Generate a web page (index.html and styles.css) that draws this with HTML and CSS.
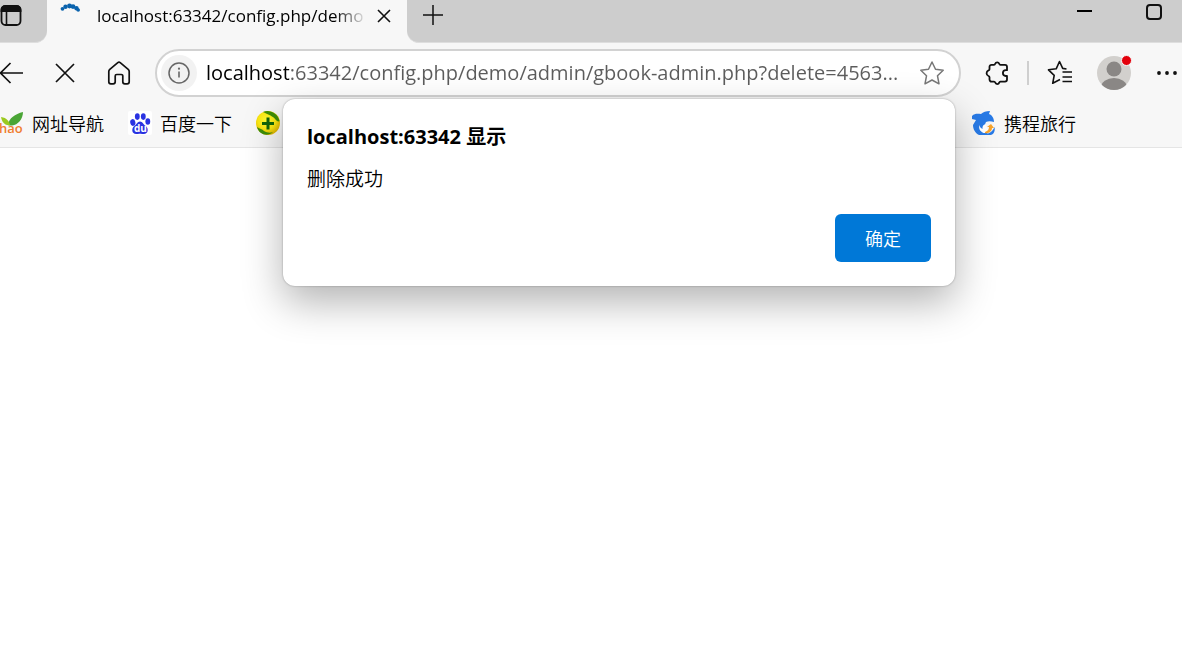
FILE: index.html
```html
<!DOCTYPE html>
<html lang="zh-CN">
<head>
<meta charset="utf-8">
<meta name="viewport" content="width=device-width, initial-scale=1">
<title>localhost:63342</title>
<link rel="stylesheet" href="styles.css">
</head>
<body>
<header class="chrome">
  <div class="tab-strip">
    <div class="strip-start">
      <button class="icon-button" type="button" aria-label="标签页操作">
        <svg width="24" height="24" viewBox="0 0 24 24"><rect x="1.500" y="2" width="19" height="19" rx="4" fill="none" stroke="#111" stroke-width="1.800"/><path d="M.6 8V6a4.500 4.500 0 0 1 4.500-4.800h11.500A4.500 4.500 0 0 1 21.400 6v2z" fill="#111"/><path d="M6.500 7v14" stroke="#111" stroke-width="1.600"/></svg>
      </button>
    </div>
    <div class="tab">
      <svg class="spinner" width="20" height="20" viewBox="0 0 20 20" fill="#0a63ad"><circle cx="2.500" cy="4.800" r="1.900"/><circle cx="5.500" cy="2.800" r="2.200"/><circle cx="9.500" cy="2" r="2.400"/><circle cx="13" cy="2.600" r="2.400"/><circle cx="16.500" cy="4.200" r="2.200"/><circle cx="18.200" cy="6" r="1.800"/></svg>
      <span class="tab-title">localhost:63342/config.php/demo</span>
      <button class="icon-button" type="button" aria-label="关闭标签页">
        <svg width="14" height="14" viewBox="0 0 14 14"><path d="M1 1l12 12M13 1L1 13" stroke="#111" stroke-width="1.600"/></svg>
      </button>
    </div>
    <div class="strip-end">
      <button class="icon-button" type="button" aria-label="新建标签页">
        <svg width="22" height="22" viewBox="0 0 22 22"><path d="M11 1v20M1 11h20" stroke="#111" stroke-width="1.500"/></svg>
      </button>
      <div class="window-controls">
        <button class="icon-button" type="button" aria-label="最小化">
          <svg width="16" height="16" viewBox="0 0 16 16"><path d="M0 7h15" stroke="#000" stroke-width="2"/></svg>
        </button>
        <button class="icon-button" type="button" aria-label="最大化">
          <svg width="16" height="16" viewBox="0 0 16 16"><rect x="1" y="1" width="14" height="14" rx="3" fill="none" stroke="#111" stroke-width="2"/></svg>
        </button>
      </div>
    </div>
  </div>

  <div class="toolbar">
    <nav class="nav-buttons" aria-label="导航">
      <button class="icon-button" type="button" aria-label="返回">
        <svg width="24" height="24" viewBox="0 0 24 24"><path d="M11.500 2L1.500 12l10 10M1.500 12h22.500" fill="none" stroke="#111" stroke-width="1.700"/></svg>
      </button>
      <button class="icon-button" type="button" aria-label="停止">
        <svg width="24" height="24" viewBox="0 0 24 24"><path d="M3 3l18 18M21 3L3 21" stroke="#111" stroke-width="1.700"/></svg>
      </button>
      <button class="icon-button" type="button" aria-label="主页">
        <svg width="24" height="24" viewBox="0 0 24 24"><path d="M10.800 1.600a2 2 0 0 1 2.400 0l8 6.700a3 3 0 0 1 1 2.300v10.200a2 2 0 0 1-2 2h-2.400a2 2 0 0 1-2-2V15a1.500 1.500 0 0 0-1.500-1.500h-4.600A1.500 1.500 0 0 0 8.200 15v5.800a2 2 0 0 1-2 2H3.800a2 2 0 0 1-2-2V10.600a3 3 0 0 1 1-2.300z" fill="none" stroke="#111" stroke-width="1.700"/></svg>
      </button>
    </nav>
    <div class="address-bar">
      <button class="icon-button site-info" type="button" aria-label="网站信息">
        <svg width="22" height="22" viewBox="0 0 22 22"><circle cx="11" cy="11" r="10" fill="none" stroke="#666" stroke-width="1.500"/><path d="M11 9.500v6" stroke="#666" stroke-width="1.600"/><circle cx="11" cy="6.700" r="1.100" fill="#666"/></svg>
      </button>
      <input class="address" type="text" aria-label="地址" value="localhost:63342/config.php/demo/admin/gbook-admin.php?delete=4563...">
      <button class="icon-button" type="button" aria-label="收藏此页">
        <svg width="26" height="26" viewBox="0 0 26 26"><path d="M13 2l3.500 7.300 7.700 1-5.700 5.500 1.500 8L13 20l-7 3.800 1.500-8-5.700-5.500 7.700-1z" fill="none" stroke="#777" stroke-width="1.500" stroke-linejoin="round"/></svg>
      </button>
    </div>
    <div class="tools">
      <button class="icon-button" type="button" aria-label="扩展">
        <svg width="24" height="24" viewBox="0 0 24 24"><path d="M6.500 3.800H9c.8 0 1-.4 1.200-1a2.100 2.100 0 0 1 4 0c.2.600.4 1 1.200 1H20a2 2 0 0 1 2 2V9.200h-1.200a2.900 2.900 0 0 0 0 5.800H22v3.600a2 2 0 0 1-2 2h-4.600c-.8 0-1 .4-1.200 1a2.100 2.100 0 0 1-4 0c-.2-.6-.4-1-1.200-1H6.500a2 2 0 0 1-2-2v-2.400c0-.8-.4-1-1-1.200a3 3 0 0 1 0-5.600c.6-.2 1-.4 1-1.200V5.800a2 2 0 0 1 2-2z" fill="none" stroke="#111" stroke-width="1.800" stroke-linejoin="round"/></svg>
      </button>
      <span class="divider"></span>
      <button class="icon-button" type="button" aria-label="收藏夹">
        <svg width="26" height="26" viewBox="0 0 26 26"><path d="M19.500 9l-3.800-.6L12.500 1.500 9.200 8.800l-7.700 1 5.700 5.500-1.500 8L13 19.500M15.500 12H25M15.500 17H25M15.500 21.500H25" fill="none" stroke="#111" stroke-width="1.600" stroke-linejoin="round"/></svg>
      </button>
      <button class="icon-button profile" type="button" aria-label="个人资料">
        <svg width="34" height="34" viewBox="0 0 34 34"><defs><clipPath id="avatar"><circle cx="17" cy="17" r="17"/></clipPath></defs><g clip-path="url(#avatar)"><path d="M0 0h34v34H0z" fill="#d2d0cd"/><circle cx="17" cy="13" r="7.500" fill="#8a8785"/><ellipse cx="17" cy="31.500" rx="13" ry="9.500" fill="#8a8785"/></g></svg>
        <span class="badge"></span>
      </button>
      <button class="icon-button" type="button" aria-label="更多">
        <svg width="20" height="6" viewBox="0 0 20 6" fill="#111"><circle cx="2" cy="3" r="1.900"/><circle cx="10" cy="3" r="1.900"/><circle cx="18" cy="3" r="1.900"/></svg>
      </button>
    </div>
  </div>

  <nav class="bookmarks" aria-label="收藏夹栏">
    <a class="bookmark" href="#nav">
      <svg width="24" height="24" viewBox="0 0 24 24"><path d="M8 14C9 7 15 3 23 1c0 7-5 13-11 13.500-2 .3-3 0-4-.5z" fill="#4aa536"/><path d="M1 6c6 1 8 4 9 8-4 1-8-2-9-8z" fill="#9bc91f"/><text class="hao" x="-1" y="22">hao</text></svg>
      网址导航
    </a>
    <a class="bookmark" href="#baidu">
      <svg width="24" height="24" viewBox="0 0 24 24"><rect width="24" height="24" rx="2" fill="#fff"/><g fill="#2932e1"><ellipse cx="4.800" cy="11.500" rx="2.600" ry="3.400" transform="rotate(-10 4.800 11.500)"/><ellipse cx="9.300" cy="5.600" rx="2.400" ry="3.300"/><ellipse cx="15.300" cy="5.600" rx="2.400" ry="3.300"/><ellipse cx="19.800" cy="10.500" rx="2.400" ry="3.200"/><path d="M12 10.500c2.500 0 3.500 3 5.800 4.600 3 2.500 2.500 8-2 8-1.500 0-2.300-.4-3.800-.4s-2.300.4-3.800.4c-4.500 0-5-5.500-2-8C8.500 13.500 9.500 10.500 12 10.500z"/></g><text class="du" x="6" y="21">du</text></svg>
      百度一下
    </a>
    <a class="bookmark bookmark-fill" href="#360" aria-label="360">
      <svg width="24" height="24" viewBox="0 0 24 24"><defs><radialGradient id="ball" cx=".45" cy=".4" r=".6"><stop offset="0" stop-color="#ffff38"/><stop offset=".6" stop-color="#fbe913"/><stop offset="1" stop-color="#dfb500"/></radialGradient></defs><circle cx="12" cy="12" r="12" fill="url(#ball)"/><path d="M7 1c6-3 15 1 16.500 9-1 1-3 0-4-1.500C17 5 13 4 7 1zM1 16c3 2 5 2 7 4 3 2 7 2 9 1-5 5-14 3-16-5z" fill="#3e8f08"/><path d="M12 6.500v12M6 12.500h12" stroke="#12660a" stroke-width="3"/></svg>
    </a>
    <a class="bookmark" href="#ctrip">
      <svg width="24" height="24" viewBox="0 0 24 24"><path d="M0 5c3-3 6-2 9-2 2-2 5-3 9-3l-1 3c3 1 5 4 5 8-3-1-6-1-8 0-2 3 0 6-1 9l4 4H7C3 22 1 18 1 14l3-5-4-1z" fill="#287ae6"/><path d="M7.500 14c-1 3 0 6 4 8 4 0 7-2 8-5l-4 1-2-5c-3 1-3 3-3 5-1.500-1-3-2-3-4z" fill="#fff"/><path d="M13 21c3-1 4-3 4-5h-2l4-3 3 4h-2c0 3-3 6-7 5z" fill="#f7a32b"/><path d="M22.500 16c1 4-1 8-4 8h-7c5-1 9-3 11-8z" fill="#287ae6"/></svg>
      携程旅行
    </a>
  </nav>
</header>

<main class="page">
  <section class="dialog" role="alertdialog" aria-labelledby="dialog-title" aria-describedby="dialog-text">
    <h1 class="dialog-title" id="dialog-title">localhost:63342 显示</h1>
    <p class="dialog-text" id="dialog-text">删除成功</p>
    <div class="dialog-actions">
      <button class="confirm" type="button">确定</button>
    </div>
  </section>
</main>
</body>
</html>
```
FILE: styles.css
```css
* {
  box-sizing: border-box;
}

body {
  margin: 0;
  min-height: 100vh;
  background: #fff;
  color: #000;
  font-family: "Open Sans", "Noto Sans", "Noto Sans CJK SC", sans-serif;
  font-size: 18px;
  line-height: 24px;
}

svg {
  display: block;
  flex: none;
  overflow: visible;
}

.icon-button {
  display: flex;
  flex: none;
  align-items: center;
  justify-content: center;
  padding: 0;
  border: 0;
  background: none;
}

.chrome {
  background: #f7f7f7;
  border-bottom: 1px solid #e5e5e5;
}

.tab-strip {
  display: flex;
  height: 43px;
}

.strip-start,
.strip-end {
  display: flex;
  align-items: flex-start;
  background: #cdcdcd;
  border-bottom: 1px solid #dedede;
}

.strip-start {
  width: 47px;
  padding-top: 4px;
  border-bottom-right-radius: 12px;
}

.strip-end {
  flex: 1;
  justify-content: space-between;
  padding: 4px 20px 0 15px;
  border-bottom-left-radius: 12px;
}

.window-controls {
  display: flex;
  gap: 53px;
}

.tab {
  display: flex;
  align-items: flex-start;
  width: 360px;
  padding: 4px 16px 0 13px;
}

.tab-title {
  flex: 1;
  margin: 0 10px 0 17px;
  font-size: 17px;
  white-space: nowrap;
  -webkit-mask-image: linear-gradient(to left, transparent, #000 32px);
  mask-image: linear-gradient(to left, transparent, #000 32px);
}

.tab .icon-button {
  height: 24px;
}

.toolbar {
  display: flex;
  align-items: center;
  gap: 24px;
  padding: 6px 5px 0 0;
}

.nav-buttons {
  display: flex;
  gap: 30px;
  margin-left: -1px;
}

.address-bar {
  display: flex;
  flex: 1;
  align-items: center;
  height: 48px;
  padding: 0 14px 0 4px;
  border: 2px solid #d2d2d2;
  border-radius: 24px;
  background: #fff;
}

.site-info {
  width: 36px;
  height: 36px;
  border-radius: 50%;
  background: #f2f2f2;
}

.address {
  flex: 1;
  min-width: 0;
  margin: 0 16px 0 9px;
  padding: 0;
  border: 0;
  background: linear-gradient(to right, #000 83px, #5c5c5c 83px);
  -webkit-background-clip: text;
  background-clip: text;
  color: transparent;
  font: 20px/28px "Open Sans", "Noto Sans", sans-serif;
  text-overflow: ellipsis;
}

.tools {
  display: flex;
  align-items: center;
  gap: 18px;
}

.divider {
  width: 2px;
  height: 24px;
  background: #cfcfcf;
}

.profile {
  position: relative;
  margin: 0 8px 0 6px;
}

.badge {
  position: absolute;
  top: -1px;
  right: -1px;
  width: 11px;
  height: 11px;
  border: 1px solid #f7f7f7;
  border-radius: 50%;
  background: #e3000b;
}

.bookmarks {
  display: flex;
  align-items: center;
  gap: 24px;
  height: 50px;
  padding: 2px 106px 0 0;
}

.bookmark {
  display: flex;
  align-items: center;
  gap: 8px;
  color: #000;
  font-family: "Noto Sans CJK SC", sans-serif;
  font-weight: 350;
  text-decoration: none;
}

.bookmark-fill {
  flex: 1;
}

.hao {
  fill: #f07d2e;
  font: 600 13px "Open Sans", sans-serif;
}

.du {
  fill: #fff;
  font: bold 10px "Open Sans", sans-serif;
}

.page {
  background: #fff;
}

.dialog {
  position: absolute;
  top: 99px;
  left: 283px;
  right: 227px;
  padding: 24px;
  border-radius: 12px;
  background: #fff;
  box-shadow: 0 0 2px rgba(0, 0, 0, 0.35), 0 16px 40px rgba(0, 0, 0, 0.3);
}

.dialog-title {
  margin: 0;
  font-size: 20px;
  line-height: 28px;
}

.dialog-text {
  margin: 13px 0 22px;
  font-family: "Noto Sans CJK SC", sans-serif;
  font-size: 19px;
  font-weight: 350;
  line-height: 28px;
}

.dialog-actions {
  display: flex;
  justify-content: flex-end;
}

.confirm {
  width: 96px;
  height: 48px;
  border: 0;
  border-radius: 6px;
  background: #0078d7;
  color: #fff;
  font: 350 18px "Noto Sans CJK SC", sans-serif;
}
```
